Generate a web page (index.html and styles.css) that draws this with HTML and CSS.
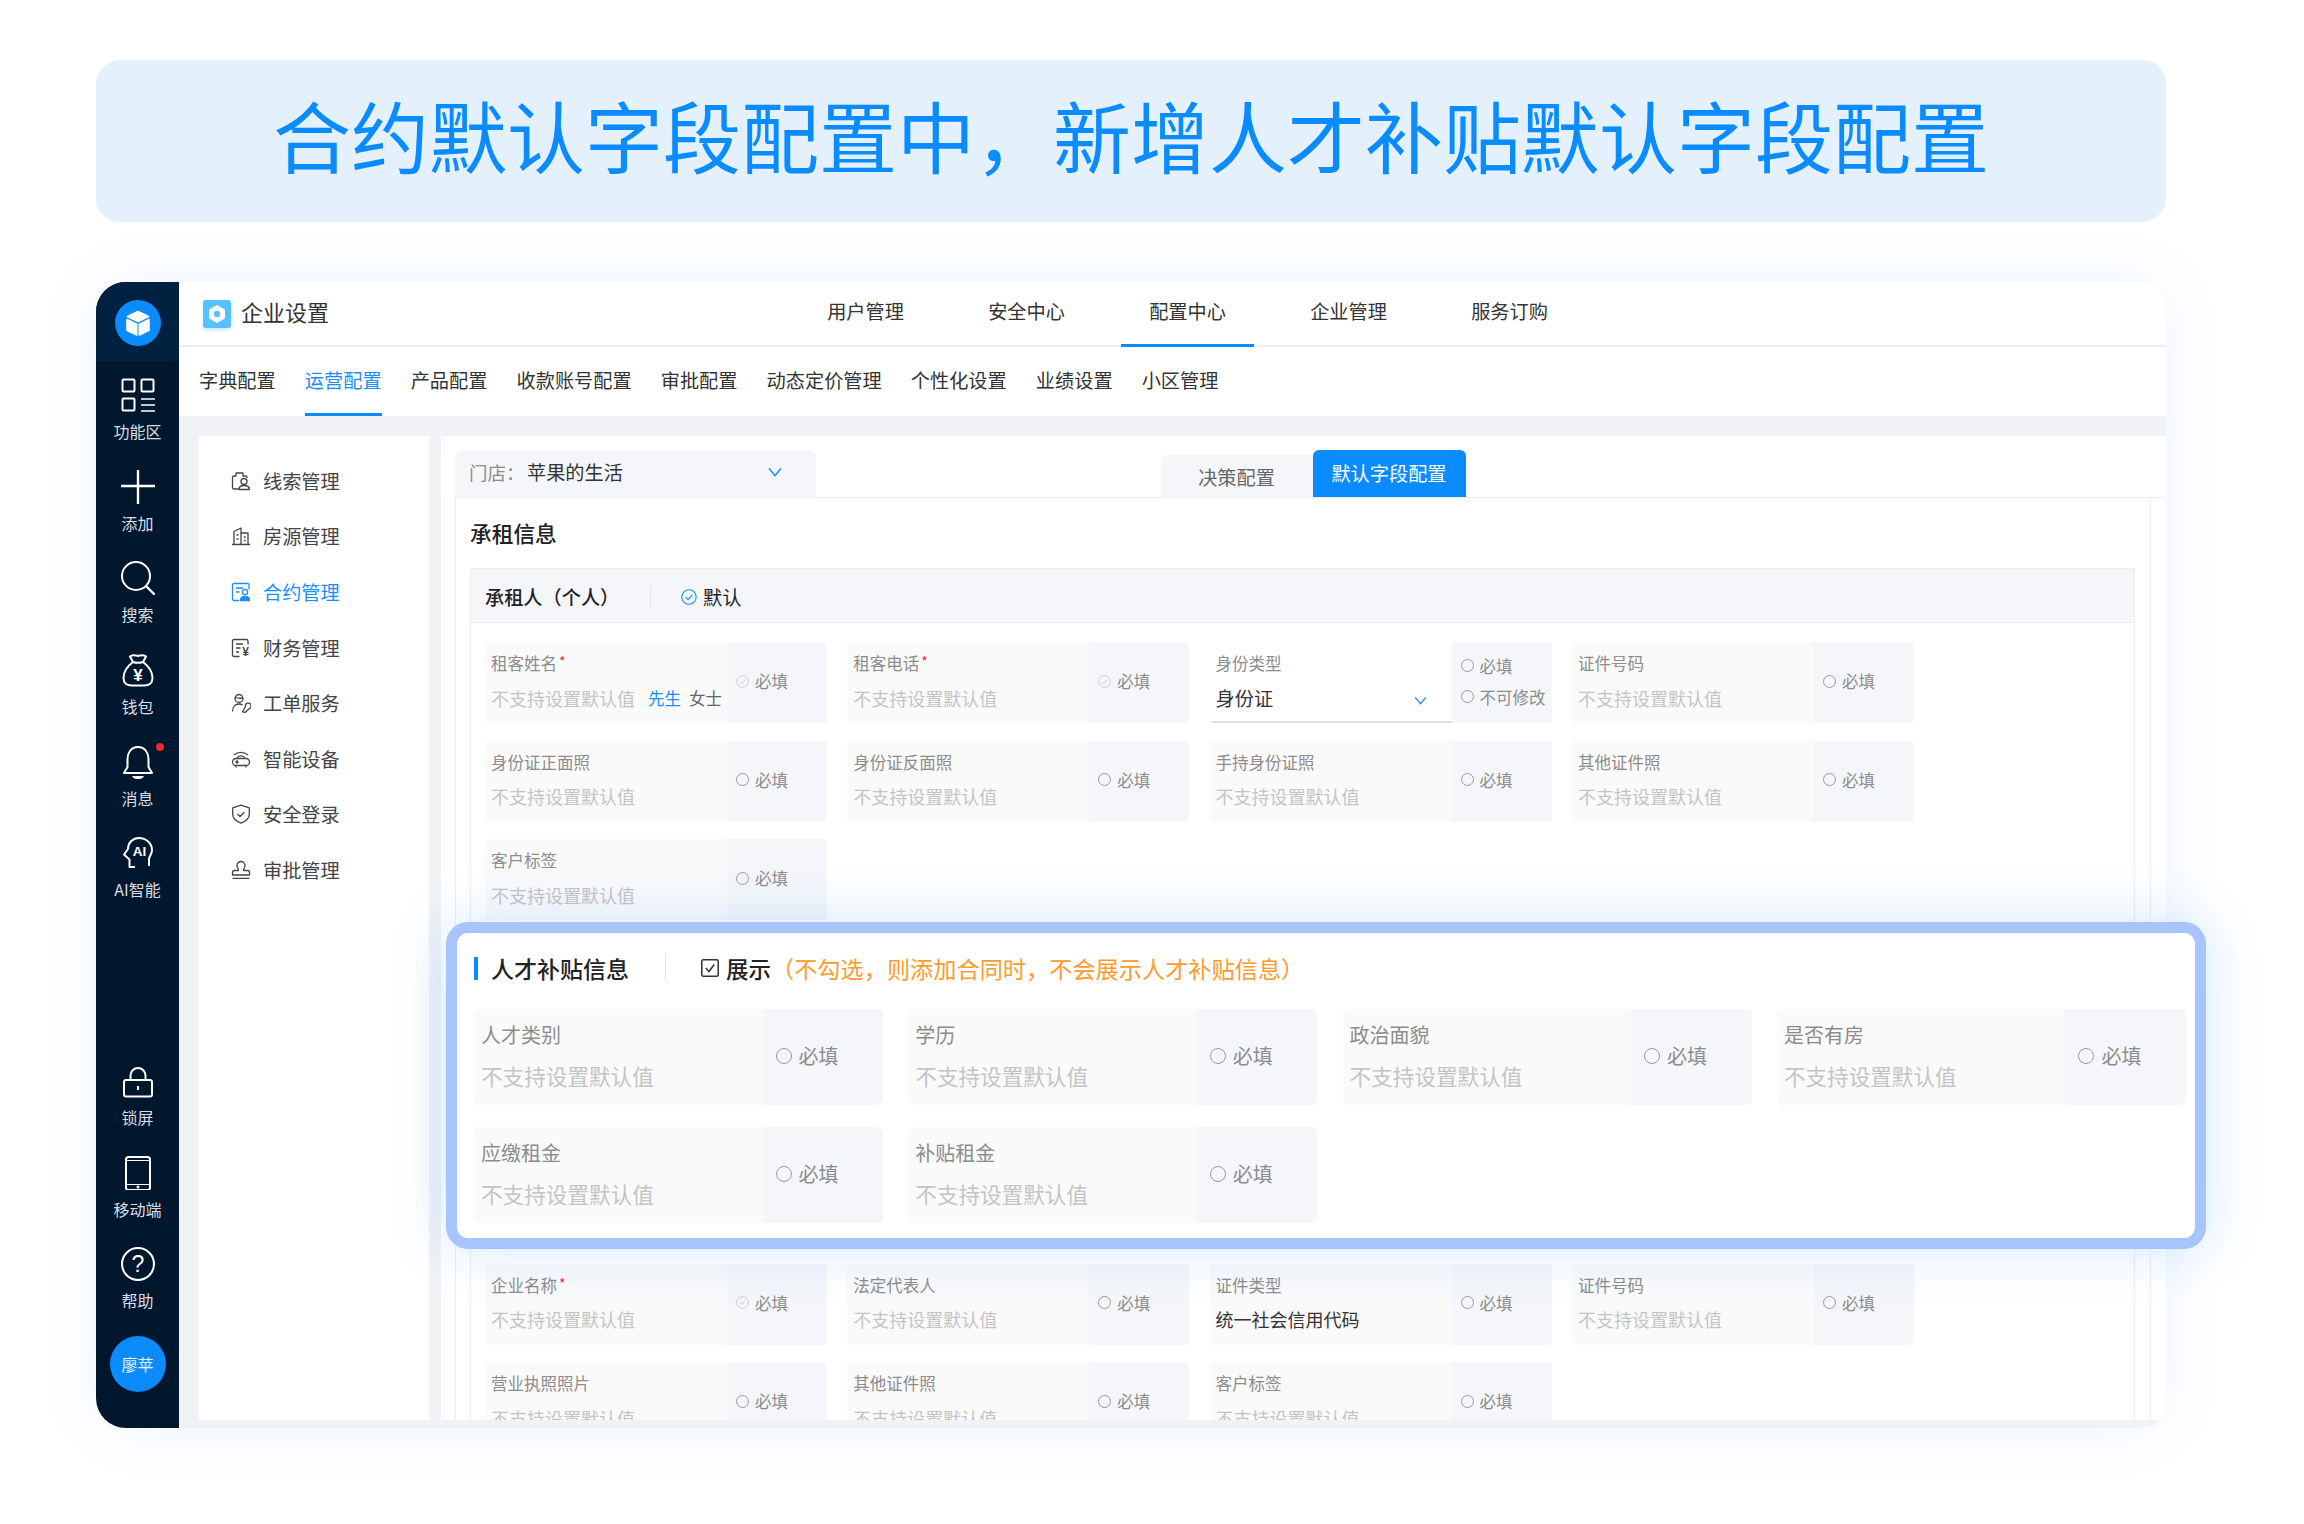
FILE: index.html
```html
<!DOCTYPE html>
<html lang="zh-CN">
<head>
<meta charset="utf-8">
<title>合约默认字段配置</title>
<link rel="stylesheet" href="styles.css">
</head>
<body>
<svg class="defs" width="0" height="0" aria-hidden="true">
  <symbol id="tick-circle" viewBox="0 0 16 16"><circle cx="8" cy="8" r="7.2" fill="none" stroke="currentColor" stroke-width="1.1"/><path d="M4.6 8.2 7 10.6 11.4 5.8" fill="none" stroke="currentColor" stroke-width="1.1"/></symbol>
  <symbol id="chev" viewBox="0 0 14 10"><path d="M1 1.5 7 8.5 13 1.5" fill="none" stroke="currentColor" stroke-width="1.5"/></symbol>
</svg>
<main class="page">
  <header class="banner"><h1 class="banner-title">合约默认字段配置中，新增人才补贴默认字段配置</h1></header>
  <section class="stage">
    <div class="app">
      <aside class="rail">
        <div class="rail-logo">
          <svg class="logo-mark" viewBox="0 0 46 46"><circle cx="23" cy="23" r="23" fill="#0a8cff"/><g fill="#fff" stroke="#fff" stroke-width="1.6" stroke-linejoin="round"><path d="M23 11.5 33.5 16.5 23 21.5 12.5 16.5Z"/><path d="M12 19.5 21.7 24.2V35L12 30.3Z"/><path d="M34 19.5 24.3 24.2V35L34 30.3Z"/></g></svg>
        </div>
        <div class="rail-item"><svg class="rail-ico" viewBox="0 0 34 34"><g fill="none" stroke="#fff" stroke-width="2"><rect x="1.5" y="1.5" width="12" height="12" rx="1"/><rect x="20.5" y="1.5" width="12" height="12" rx="1"/><rect x="1.5" y="20.5" width="12" height="12" rx="1"/><path d="M20 21h14M20 27h14M20 33h14" stroke-width="1.4"/></g></svg><span class="rail-label">功能区</span></div>
        <div class="rail-item"><svg class="rail-ico" viewBox="0 0 34 34"><path d="M0 16h34M17 0v34" fill="none" stroke="#fff" stroke-width="2.4"/></svg><span class="rail-label">添加</span></div>
        <div class="rail-item"><svg class="rail-ico" viewBox="0 0 34 34"><circle cx="15" cy="15" r="14" fill="none" stroke="#fff" stroke-width="2"/><path d="M25.5 25.5 33 33" stroke="#fff" stroke-width="2.4" stroke-linecap="round"/></svg><span class="rail-label">搜索</span></div>
        <div class="rail-item"><svg class="rail-ico" viewBox="0 0 34 34"><g fill="none" stroke="#fff" stroke-width="2" stroke-linejoin="round"><path d="M12 9C6 13.500 2.500 19 2.500 25c0 5 3.500 7.500 8 7.500h13c4.500 0 8-2.500 8-7.500 0-6-3.500-11.500-9.500-16"/><path d="M12 9 9 3.500c2.500-2.500 5-1 8-.5 3-.5 5.500-2 8 .5L22 9c-3 1-7 1-10 0Z"/></g><text class="yen" x="17" y="28" text-anchor="middle">¥</text></svg><span class="rail-label">钱包</span></div>
        <div class="rail-item"><svg class="rail-ico rail-ico-tall" viewBox="0 0 34 34"><path d="M17 2C10 2 6.500 8 6.500 14v8L3 28h28l-3.500-6v-8C27.500 8 24 2 17 2Z" fill="none" stroke="#fff" stroke-width="2" stroke-linejoin="round"/><path d="M11 31h12c-1 2.500-3.500 3-6 3s-5-.5-6-3Z" fill="#fff"/></svg><i class="rail-dot"></i><span class="rail-label">消息</span></div>
        <div class="rail-item"><svg class="rail-ico" viewBox="0 0 34 34"><path d="M14 31H8.500V23.500L3 18.500 7 13C7 6.500 12 2 18 2c7 0 13 5.500 13 12 0 4-2.500 6-3 9v7" fill="none" stroke="#fff" stroke-width="2" stroke-linejoin="round"/><text class="ai" x="18.500" y="20" text-anchor="middle">AI</text></svg><span class="rail-label">AI智能</span></div>
        <div class="rail-fill"></div>
        <div class="rail-item"><svg class="rail-ico" viewBox="0 0 34 34"><rect x="3" y="16" width="28" height="16.500" rx="2" fill="none" stroke="#fff" stroke-width="2"/><path d="M9.500 16v-4.500a7.500 7.500 0 0 1 15 0V16M17 22v4" fill="none" stroke="#fff" stroke-width="2"/></svg><span class="rail-label">锁屏</span></div>
        <div class="rail-item"><svg class="rail-ico" viewBox="0 0 34 34"><rect x="5" y="1" width="24" height="33" rx="2.500" fill="none" stroke="#fff" stroke-width="2"/><path d="M5 4.500h24M5 28.500h24" stroke="#fff" stroke-width="1"/><circle cx="17" cy="31" r="1.500" fill="#fff"/></svg><span class="rail-label">移动端</span></div>
        <div class="rail-item"><svg class="rail-ico" viewBox="0 0 34 34"><circle cx="17" cy="17" r="16" fill="none" stroke="#fff" stroke-width="2"/><text class="help" x="17" y="25" text-anchor="middle">?</text></svg><span class="rail-label">帮助</span></div>
        <div class="avatar">廖苹</div>
      </aside>

      <div class="workspace">
        <header class="topbar">
          <div class="brand">
            <svg class="brand-ico" viewBox="0 0 28 28"><rect width="28" height="28" rx="3" fill="#55c1ff"/><path d="M14 5.500 21.500 9.800v8.400L14 22.500 6.500 18.200V9.800Z" fill="#fff" stroke="#fff" stroke-linejoin="round"/><circle cx="14" cy="14" r="3.200" fill="#55c1ff"/></svg>
            <span class="brand-name">企业设置</span>
          </div>
          <nav class="topnav">
            <a class="topnav-item">用户管理</a>
            <a class="topnav-item">安全中心</a>
            <a class="topnav-item is-active">配置中心</a>
            <a class="topnav-item">企业管理</a>
            <a class="topnav-item">服务订购</a>
          </nav>
        </header>
        <nav class="subnav">
          <a class="subnav-item">字典配置</a>
          <a class="subnav-item is-active">运营配置</a>
          <a class="subnav-item">产品配置</a>
          <a class="subnav-item">收款账号配置</a>
          <a class="subnav-item">审批配置</a>
          <a class="subnav-item">动态定价管理</a>
          <a class="subnav-item">个性化设置</a>
          <a class="subnav-item">业绩设置</a>
          <a class="subnav-item">小区管理</a>
        </nav>
        <div class="main">
          <nav class="menu">
            <a class="menu-item"><svg class="menu-ico" viewBox="0 0 20 20"><path d="M8.500 18H3Q1.500 18 1.500 16.500V6.200Q1.500 5 3 5h2V2h7v3h2.500Q16 5 16 6.200V7M8 18.500C8 15.500 10.500 14.500 13 14.500s5.500 1 5.500 4Z"/><circle cx="13" cy="10.500" r="3"/></svg>线索管理</a>
            <a class="menu-item"><svg class="menu-ico" viewBox="0 0 20 20"><path d="M1 18.500h18M3 18.500V5.500L10 2v16.500M10 7h7v11.500M5.500 9h2M5.500 13h2M12.800 11h1.800M12.800 14.500h1.800"/></svg>房源管理</a>
            <a class="menu-item is-active"><svg class="menu-ico" viewBox="0 0 20 20"><path d="M18 7.500V3q0-1.500-1.500-1.500H3Q1.500 1.500 1.500 3v14q0 1.500 1.500 1.500h5M5 6h7M5 10h3.500"/><circle cx="14" cy="10" r="2.600"/><path d="M9.500 18.500C9.500 15.500 12 14.500 14 14.500s4.500 1 4.500 4Z" fill="currentColor"/></svg>合约管理</a>
            <a class="menu-item"><svg class="menu-ico" viewBox="0 0 20 20"><path d="M17 6.500V3q0-1.500-1.500-1.500H3Q1.500 1.500 1.500 3v14q0 1.500 1.500 1.500h5.500M5 6h7M5 10h4.500M5 14h3"/><text class="menu-yen" x="14.500" y="18" text-anchor="middle">¥</text></svg>财务管理</a>
            <a class="menu-item"><svg class="menu-ico" viewBox="0 0 20 20"><circle cx="8" cy="5.500" r="4"/><path d="M1.500 18.500C1.500 14 4 11 8 11c1.500 0 2.500.3 3.500 1M4 4.500c3 1 5 1 8 .5"/><path d="M11.500 18.800 14.500 13.500A2.800 2.800 0 1 1 18.300 15.500L14.500 19.300Z"/></svg>工单服务</a>
            <a class="menu-item"><svg class="menu-ico" viewBox="0 0 20 20"><rect x="1.500" y="9.500" width="17" height="7" rx="3.500"/><circle cx="6" cy="13" r="1"/><path d="M3 6C7 2.500 13 2.500 17 6M6 8.500c2.500-2 5.500-2 8 0M5 16.500v2M15 16.500v2"/></svg>智能设备</a>
            <a class="menu-item"><svg class="menu-ico" viewBox="0 0 20 20"><path d="M10 1.200 18.300 3.800V10c0 5-4 7.500-8.300 9.200C5.700 17.500 1.700 15 1.700 10V3.800ZM6.500 10l2.500 2.500 4.500-4.500"/></svg>安全登录</a>
            <a class="menu-item"><svg class="menu-ico" viewBox="0 0 20 20"><path d="M7.500 10.500C7.500 8.500 6 7.500 6 5.500a4 4 0 0 1 8 0c0 2-1.500 3-1.500 5H16.500Q18.500 10.500 18.500 12.500V15H1.500V12.500Q1.500 10.500 3.500 10.500ZM1.500 18.300h17"/></svg>审批管理</a>
          </nav>
          <div class="content">
            <div class="toolbar">
              <div class="store"><span class="store-key">门店：</span><span class="store-val">苹果的生活</span><svg class="chev store-chev"><use href="#chev"/></svg></div>
              <div class="tabs">
                <a class="tab">决策配置</a>
                <a class="tab is-active">默认字段配置</a>
              </div>
            </div>
            <div class="pane">
              <h2 class="pane-title">承租信息</h2>
              <section class="group">
                <header class="group-head">
                  <span class="group-name">承租人（个人）</span>
                  <i class="group-rule"></i>
                  <svg class="group-tick"><use href="#tick-circle"/></svg>
                  <span class="group-flag">默认</span>
                </header>
                <div class="fields">
                  <div class="field">
                    <div class="field-main"><div class="field-label">租客姓名<em class="req">*</em></div><div class="field-value"><span class="ph">不支持设置默认值</span><span class="opt opt-on">先生</span><span class="opt">女士</span></div></div>
                    <div class="field-side"><label class="chk"><svg class="tick"><use href="#tick-circle"/></svg>必填</label></div>
                  </div>
                  <div class="field">
                    <div class="field-main"><div class="field-label">租客电话<em class="req">*</em></div><div class="field-value"><span class="ph">不支持设置默认值</span></div></div>
                    <div class="field-side"><label class="chk"><svg class="tick"><use href="#tick-circle"/></svg>必填</label></div>
                  </div>
                  <div class="field">
                    <div class="field-main field-select"><div class="field-label">身份类型</div><div class="field-value"><span class="val">身份证</span><svg class="chev select-chev"><use href="#chev"/></svg></div></div>
                    <div class="field-side field-side-stack"><label class="chk"><i class="radio"></i>必填</label><label class="chk"><i class="radio"></i>不可修改</label></div>
                  </div>
                  <div class="field">
                    <div class="field-main"><div class="field-label">证件号码</div><div class="field-value"><span class="ph">不支持设置默认值</span></div></div>
                    <div class="field-side"><label class="chk"><i class="radio"></i>必填</label></div>
                  </div>
                  <div class="field">
                    <div class="field-main"><div class="field-label">身份证正面照</div><div class="field-value"><span class="ph">不支持设置默认值</span></div></div>
                    <div class="field-side"><label class="chk"><i class="radio"></i>必填</label></div>
                  </div>
                  <div class="field">
                    <div class="field-main"><div class="field-label">身份证反面照</div><div class="field-value"><span class="ph">不支持设置默认值</span></div></div>
                    <div class="field-side"><label class="chk"><i class="radio"></i>必填</label></div>
                  </div>
                  <div class="field">
                    <div class="field-main"><div class="field-label">手持身份证照</div><div class="field-value"><span class="ph">不支持设置默认值</span></div></div>
                    <div class="field-side"><label class="chk"><i class="radio"></i>必填</label></div>
                  </div>
                  <div class="field">
                    <div class="field-main"><div class="field-label">其他证件照</div><div class="field-value"><span class="ph">不支持设置默认值</span></div></div>
                    <div class="field-side"><label class="chk"><i class="radio"></i>必填</label></div>
                  </div>
                  <div class="field">
                    <div class="field-main"><div class="field-label">客户标签</div><div class="field-value"><span class="ph">不支持设置默认值</span></div></div>
                    <div class="field-side"><label class="chk"><i class="radio"></i>必填</label></div>
                  </div>
                </div>
                <div class="fields fields-company">
                  <div class="field">
                    <div class="field-main"><div class="field-label">企业名称<em class="req">*</em></div><div class="field-value"><span class="ph">不支持设置默认值</span></div></div>
                    <div class="field-side"><label class="chk"><svg class="tick"><use href="#tick-circle"/></svg>必填</label></div>
                  </div>
                  <div class="field">
                    <div class="field-main"><div class="field-label">法定代表人</div><div class="field-value"><span class="ph">不支持设置默认值</span></div></div>
                    <div class="field-side"><label class="chk"><i class="radio"></i>必填</label></div>
                  </div>
                  <div class="field">
                    <div class="field-main"><div class="field-label">证件类型</div><div class="field-value"><span class="val val-sm">统一社会信用代码</span></div></div>
                    <div class="field-side"><label class="chk"><i class="radio"></i>必填</label></div>
                  </div>
                  <div class="field">
                    <div class="field-main"><div class="field-label">证件号码</div><div class="field-value"><span class="ph">不支持设置默认值</span></div></div>
                    <div class="field-side"><label class="chk"><i class="radio"></i>必填</label></div>
                  </div>
                  <div class="field">
                    <div class="field-main"><div class="field-label">营业执照照片</div><div class="field-value"><span class="ph">不支持设置默认值</span></div></div>
                    <div class="field-side"><label class="chk"><i class="radio"></i>必填</label></div>
                  </div>
                  <div class="field">
                    <div class="field-main"><div class="field-label">其他证件照</div><div class="field-value"><span class="ph">不支持设置默认值</span></div></div>
                    <div class="field-side"><label class="chk"><i class="radio"></i>必填</label></div>
                  </div>
                  <div class="field">
                    <div class="field-main"><div class="field-label">客户标签</div><div class="field-value"><span class="ph">不支持设置默认值</span></div></div>
                    <div class="field-side"><label class="chk"><i class="radio"></i>必填</label></div>
                  </div>
                </div>
              </section>
            </div>
          </div>
        </div>
      </div>
    </div>

    <aside class="callout">
      <header class="callout-head">
        <i class="callout-bar"></i>
        <span class="callout-title">人才补贴信息</span>
        <i class="callout-rule"></i>
        <svg class="callout-check" viewBox="0 0 18 18"><rect x=".8" y=".8" width="16.400" height="16.400" rx="1.500" fill="none" stroke="#333" stroke-width="1.500"/><path d="M4.800 9 8 12.500 13.200 5.500" fill="none" stroke="#333" stroke-width="1.500"/></svg>
        <span class="callout-show">展示</span>
        <span class="callout-note">（不勾选，则添加合同时，不会展示人才补贴信息）</span>
      </header>
      <div class="big-fields">
        <div class="big-field">
          <div class="big-main"><div class="big-label">人才类别</div><div class="big-value">不支持设置默认值</div></div>
          <div class="big-side"><i class="big-radio"></i>必填</div>
        </div>
        <div class="big-field">
          <div class="big-main"><div class="big-label">学历</div><div class="big-value">不支持设置默认值</div></div>
          <div class="big-side"><i class="big-radio"></i>必填</div>
        </div>
        <div class="big-field">
          <div class="big-main"><div class="big-label">政治面貌</div><div class="big-value">不支持设置默认值</div></div>
          <div class="big-side"><i class="big-radio"></i>必填</div>
        </div>
        <div class="big-field">
          <div class="big-main"><div class="big-label">是否有房</div><div class="big-value">不支持设置默认值</div></div>
          <div class="big-side"><i class="big-radio"></i>必填</div>
        </div>
        <div class="big-field">
          <div class="big-main"><div class="big-label">应缴租金</div><div class="big-value">不支持设置默认值</div></div>
          <div class="big-side"><i class="big-radio"></i>必填</div>
        </div>
        <div class="big-field">
          <div class="big-main"><div class="big-label">补贴租金</div><div class="big-value">不支持设置默认值</div></div>
          <div class="big-side"><i class="big-radio"></i>必填</div>
        </div>
      </div>
    </aside>
  </section>
</main>
</body>
</html>
```

FILE: styles.css
```css
* { box-sizing: border-box; }
html, body { margin: 0; padding: 0; background: #fff; }
body {
  width: 2304px;
  height: 1524px;
  overflow: hidden;
  font-family: "Noto Sans CJK SC", "Noto Sans", sans-serif;
  color: #333;
}
a { color: inherit; text-decoration: none; }
em, i { font-style: normal; }
.defs { position: absolute; }

.page { padding: 60px 138px 96px 96px; }

.banner {
  height: 162px;
  padding-bottom: 14px;
  background: #e4f1fd;
  border-radius: 24px;
  display: flex;
  align-items: center;
  justify-content: center;
}
.banner-title {
  margin: 0;
  font-size: 78px;
  font-weight: 400;
  line-height: 100px;
  color: #0a8cff;
  white-space: nowrap;
}

.stage { position: relative; margin-top: 60px; height: 1146px; }
.app {
  display: flex;
  height: 100%;
  background: #fff;
  border-radius: 30px 24px 24px 30px;
  overflow: hidden;
}
.stage::before {
  content: "";
  position: absolute;
  inset: 0;
  border-radius: 30px 24px 24px 30px;
  box-shadow: 0 0 60px rgba(40, 130, 255, .09);
  pointer-events: none;
}

/* rail */
.rail {
  position: relative;
  width: 83px;
  flex: none;
  background: #01172e;
  display: flex;
  flex-direction: column;
  align-items: center;
}
.rail-logo {
  width: 100%;
  height: 79px;
  background: #012141;
  display: flex;
  justify-content: center;
  padding-top: 18px;
  margin-bottom: 8px;
}
.logo-mark { width: 46px; height: 46px; }
.rail-item {
  position: relative;
  width: 100%;
  height: 91.7px;
  padding-top: 9px;
  display: flex;
  flex-direction: column;
  align-items: center;
}
.rail-ico { width: 34px; height: 34px; flex: none; }
.rail-label {
  margin-top: 7px;
  font-size: 16px;
  line-height: 24px;
  color: #d9dee4;
  white-space: nowrap;
}
.rail-dot {
  position: absolute;
  top: 7px;
  left: 60px;
  width: 8px;
  height: 8px;
  border-radius: 50%;
  background: #f5282d;
}
.rail-fill { flex: 1; }
.yen { font-size: 17px; font-weight: 700; fill: #fff; font-family: "Liberation Sans", sans-serif; }
.ai { font-size: 13.500px; font-weight: 700; fill: #fff; font-family: "Liberation Sans", sans-serif; }
.help { font-size: 23px; fill: #fff; font-family: "Liberation Sans", sans-serif; }
.avatar {
  width: 56px;
  height: 56px;
  flex: none;
  margin: 6px 0 36px;
  border-radius: 50%;
  background: #0a8cff;
  color: #e8f4ff;
  font-size: 16px;
  display: flex;
  align-items: center;
  justify-content: center;
}

/* workspace */
.workspace { flex: 1; min-width: 0; display: flex; flex-direction: column; }

.topbar {
  height: 65px;
  flex: none;
  padding-left: 24px;
  display: flex;
  border-bottom: 2px solid #eee;
}
.brand { display: flex; align-items: center; gap: 10px; width: 126px; flex: none; }
.brand-ico { width: 28px; height: 28px; filter: drop-shadow(0 2px 2px rgba(85, 193, 255, .35)); }
.brand-name { margin-bottom: 6px; font-size: 22px; color: #333; white-space: nowrap; }
.topnav { display: flex; gap: 28px; margin-left: 470px; height: 65px; }
.topnav-item {
  width: 133px;
  height: 65px;
  text-align: center;
  font-size: 19.200px;
  line-height: 59px;
  color: #333;
  border-bottom: 3px solid transparent;
}
.topnav-item.is-active { border-bottom-color: #0a8cff; }

.subnav {
  height: 69px;
  flex: none;
  padding-left: 20px;
  display: flex;
  gap: 29.100px;
}
.subnav-item {
  height: 69px;
  font-size: 19.200px;
  line-height: 66px;
  color: #333;
  border-bottom: 3px solid transparent;
  white-space: nowrap;
}
.subnav-item.is-active { color: #1a8dfb; border-bottom-color: #0a8cff; }

.main {
  flex: 1;
  min-height: 0;
  display: flex;
  gap: 12px;
  padding: 20px 0 8px 20px;
  background: #f0f2f6;
}

.menu { width: 230px; flex: none; padding: 17px 0 0 32px; background: #fff; }
.menu-item {
  height: 55.600px;
  display: flex;
  align-items: center;
  gap: 12px;
  font-size: 19.200px;
  color: #444;
}
.menu-item.is-active { color: #1a8dfb; }
.menu-ico {
  width: 20px;
  height: 20px;
  flex: none;
  fill: none;
  stroke: currentColor;
  stroke-width: 1.300;
  stroke-linejoin: round;
}
.menu-yen { font-size: 12px; font-weight: 700; fill: currentColor; stroke: none; font-family: "Liberation Sans", sans-serif; }

.content {
  flex: 1;
  min-width: 0;
  padding-left: 14px;
  background: #fff;
  display: flex;
  flex-direction: column;
}
.toolbar {
  height: 62px;
  flex: none;
  display: flex;
  align-items: flex-end;
  border-bottom: 1px solid #ebebeb;
}
.store {
  width: 361px;
  height: 47px;
  flex: none;
  padding: 0 0 3px 14px;
  display: flex;
  align-items: center;
  background: #f5f6fa;
  border-radius: 8px 8px 0 0;
  font-size: 19.200px;
}
.store-key { color: #8c8c8c; font-size: 18.500px; width: 58px; white-space: nowrap; }
.store-val { color: #333; }
.chev { display: block; color: #1a8dfb; }
.store-chev { width: 14px; height: 10px; margin-left: 145px; }
.tabs { display: flex; align-items: flex-end; margin-left: 344.500px; }
.tab {
  width: 152px;
  height: 42px;
  background: #f5f6fa;
  border-radius: 6px 0 0 0;
  text-align: center;
  font-size: 19.200px;
  line-height: 44px;
  color: #666;
}
.tab.is-active {
  width: 153px;
  height: 47px;
  background: #0a8cff;
  border-radius: 6px 6px 0 0;
  line-height: 47px;
  color: #fff;
}

.pane {
  flex: 1;
  min-height: 0;
  width: 1696px;
  overflow: hidden;
  padding-left: 14px;
  border-left: 1px solid #eee;
  border-right: 1px solid #eee;
}
.pane-title {
  margin: 0;
  height: 70px;
  font-size: 21.700px;
  font-weight: 500;
  line-height: 69px;
  color: #222;
}
.group {
  width: 1665px;
  border-left: 1px solid #eee;
  border-right: 1px solid #eee;
}
.group-head {
  height: 55px;
  padding: 2px 0 0 14px;
  margin-left: -1px;
  margin-right: -1px;
  display: flex;
  align-items: center;
  background: #f5f6fa;
  border: 1px solid #ececec;
  border-radius: 3px 3px 0 0;
}
.group-name { width: 134px; font-size: 19.200px; font-weight: 500; color: #222; white-space: nowrap; }
.group-rule { width: 1px; height: 24px; margin-left: 31px; background: #e6e6e6; }
.group-tick { width: 16px; height: 16px; margin-left: 30px; color: #1a8dfb; }
.group-flag { margin-left: 6px; font-size: 19.200px; color: #222; }

.fields {
  display: grid;
  grid-template-columns: repeat(4, 342px);
  column-gap: 20.300px;
  row-gap: 17.500px;
  padding: 19px 0 0 14px;
}
.fields-company { padding-top: 0; margin-top: 343.500px; }
.field { height: 81px; display: flex; border-radius: 4px; overflow: hidden; }
.field-main { flex: 1; min-width: 0; padding: 9px 0 0 6px; background: #fafafa; }
.field-select { background: #fff; border-bottom: 2px solid #e0e0e0; }
.field-side {
  width: 100px;
  flex: none;
  display: flex;
  flex-direction: column;
  justify-content: center;
  padding: 0 0 3px 9px;
  background: #f5f6fa;
}
.field-side-stack { gap: 7px; padding-bottom: 3px; }
.field-label { font-size: 16.500px; line-height: 24px; color: #8c8c8c; white-space: nowrap; }
.req { margin-left: 2px; font-size: 14px; line-height: 1; color: #f5282d; vertical-align: 3px; }
.field-value {
  margin-top: 10.500px;
  display: flex;
  align-items: center;
  height: 24px;
  white-space: nowrap;
}
.ph { font-size: 18px; color: #c4c4c4; }
.val { font-size: 19.200px; color: #333; }
.val-sm { font-size: 18px; }
.opt { margin-left: 8px; font-size: 16.500px; color: #666; }
.opt-on { margin-left: 13px; color: #1a8dfb; }
.select-chev { width: 13px; height: 9px; margin-left: 141px; margin-top: 6px; }
.chk {
  display: flex;
  align-items: center;
  gap: 6px;
  height: 24px;
  font-size: 16.500px;
  color: #8c8c8c;
  white-space: nowrap;
}
.radio {
  width: 13px;
  height: 13px;
  flex: none;
  border: 1px solid #9a9a9a;
  border-radius: 50%;
}
.tick { width: 13px; height: 13px; flex: none; color: #c8c8c8; }

/* callout */
.callout {
  position: absolute;
  left: 350px;
  top: 640px;
  width: 1760px;
  height: 327px;
  padding: 0 9px 0 17px;
  background: #fff;
  border: 11px solid #a8c4ff;
  border-radius: 22px;
  box-shadow: 0 0 55px rgba(20, 125, 255, .19);
}
.callout-head { height: 69px; margin-bottom: 7px; display: flex; align-items: center; white-space: nowrap; }
.callout-bar { width: 4px; height: 23px; margin-top: 1px; background: #0a8cff; }
.callout-title { margin-left: 13px; font-size: 23px; width: 138px; color: #222; font-weight: 500; }
.callout-rule { width: 1px; height: 27px; margin-left: 36px; background: #e6e6e6; }
.callout-check { width: 18px; height: 18px; margin-left: 35px; margin-top: 1px; }
.callout-show { margin-left: 7px; width: 45px; font-size: 22.500px; color: #222; font-weight: 500; }
.callout-note { font-size: 23.200px; color: #ff9a2e; }

.big-fields {
  display: grid;
  grid-template-columns: repeat(4, 409px);
  column-gap: 25.300px;
  row-gap: 22px;
}
.big-field { height: 96px; display: flex; border-radius: 5px; overflow: hidden; }
.big-main { width: 288.500px; flex: none; padding: 12px 0 0 7px; background: #fafafa; }
.big-side {
  flex: 1;
  display: flex;
  align-items: center;
  gap: 7px;
  padding: 0 0 3px 13px;
  background: #f5f6fa;
  font-size: 20px;
  color: #8c8c8c;
  white-space: nowrap;
}
.big-radio { width: 16px; height: 16px; flex: none; border: 1.500px solid #9a9a9a; border-radius: 50%; }
.big-label { font-size: 20px; line-height: 28px; color: #8c8c8c; }
.big-value { margin-top: 12.500px; font-size: 21.600px; line-height: 28px; color: #c4c4c4; white-space: nowrap; }
```
